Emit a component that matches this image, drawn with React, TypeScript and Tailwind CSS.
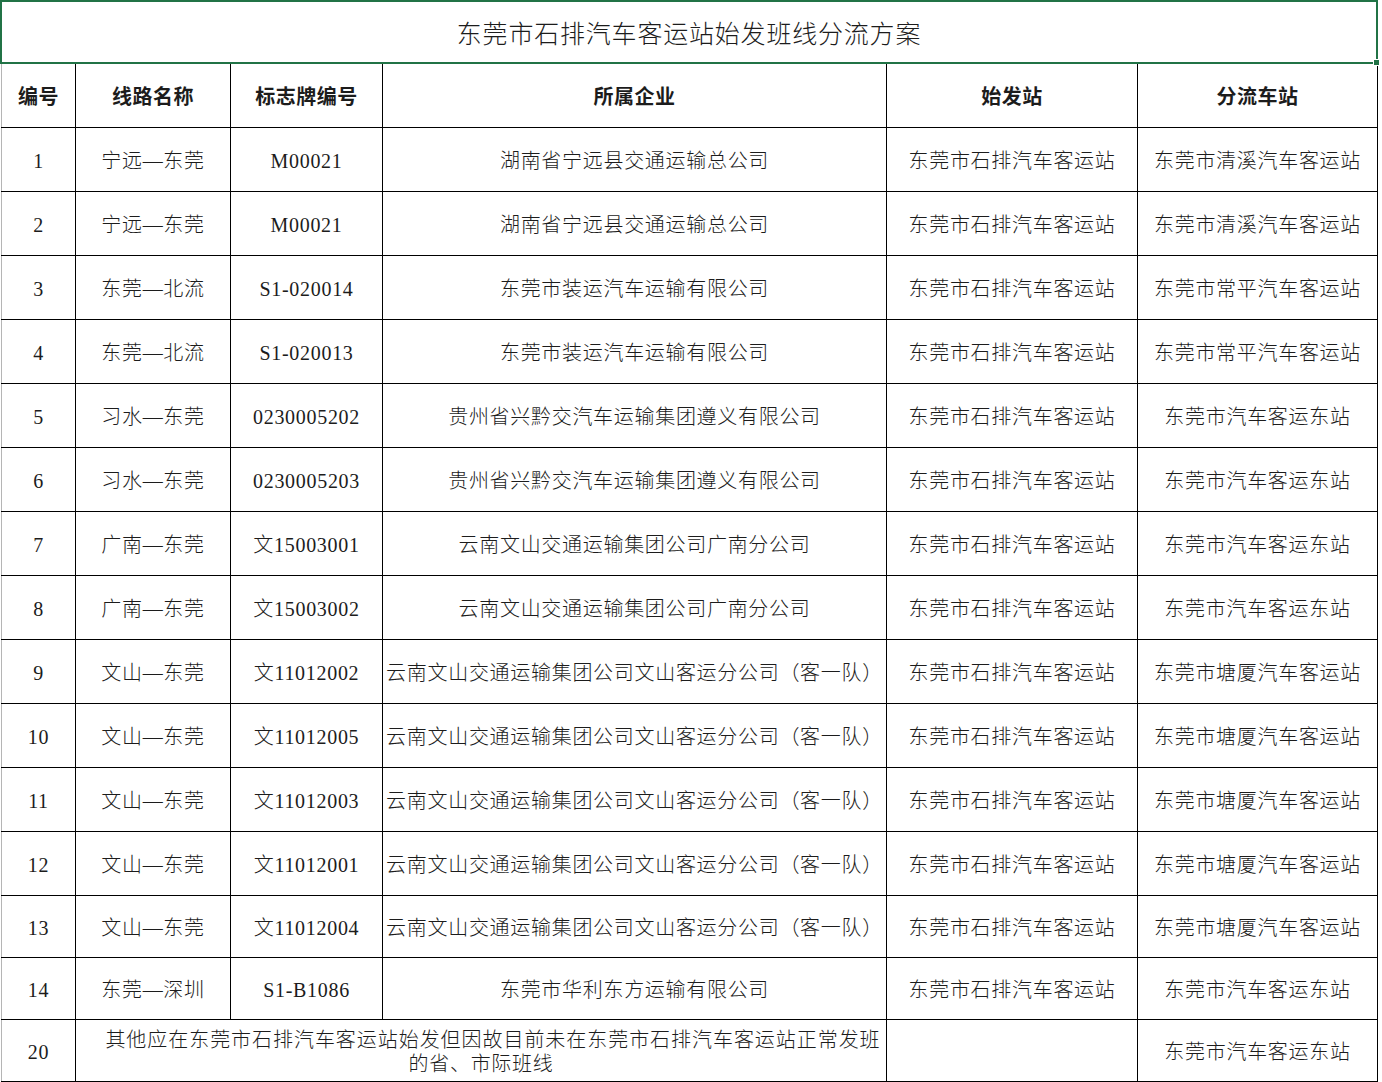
import React from 'react';

type Row = {
  no: string;
  line: string;
  plate: string;
  company: string;
  from: string;
  to: string;
};

const rows: Row[] = [
  { no: '1', line: '宁远—东莞', plate: 'M00021', company: '湖南省宁远县交通运输总公司', from: '东莞市石排汽车客运站', to: '东莞市清溪汽车客运站' },
  { no: '2', line: '宁远—东莞', plate: 'M00021', company: '湖南省宁远县交通运输总公司', from: '东莞市石排汽车客运站', to: '东莞市清溪汽车客运站' },
  { no: '3', line: '东莞—北流', plate: 'S1-020014', company: '东莞市装运汽车运输有限公司', from: '东莞市石排汽车客运站', to: '东莞市常平汽车客运站' },
  { no: '4', line: '东莞—北流', plate: 'S1-020013', company: '东莞市装运汽车运输有限公司', from: '东莞市石排汽车客运站', to: '东莞市常平汽车客运站' },
  { no: '5', line: '习水—东莞', plate: '0230005202', company: '贵州省兴黔交汽车运输集团遵义有限公司', from: '东莞市石排汽车客运站', to: '东莞市汽车客运东站' },
  { no: '6', line: '习水—东莞', plate: '0230005203', company: '贵州省兴黔交汽车运输集团遵义有限公司', from: '东莞市石排汽车客运站', to: '东莞市汽车客运东站' },
  { no: '7', line: '广南—东莞', plate: '文15003001', company: '云南文山交通运输集团公司广南分公司', from: '东莞市石排汽车客运站', to: '东莞市汽车客运东站' },
  { no: '8', line: '广南—东莞', plate: '文15003002', company: '云南文山交通运输集团公司广南分公司', from: '东莞市石排汽车客运站', to: '东莞市汽车客运东站' },
  { no: '9', line: '文山—东莞', plate: '文11012002', company: '云南文山交通运输集团公司文山客运分公司（客一队）', from: '东莞市石排汽车客运站', to: '东莞市塘厦汽车客运站' },
  { no: '10', line: '文山—东莞', plate: '文11012005', company: '云南文山交通运输集团公司文山客运分公司（客一队）', from: '东莞市石排汽车客运站', to: '东莞市塘厦汽车客运站' },
  { no: '11', line: '文山—东莞', plate: '文11012003', company: '云南文山交通运输集团公司文山客运分公司（客一队）', from: '东莞市石排汽车客运站', to: '东莞市塘厦汽车客运站' },
  { no: '12', line: '文山—东莞', plate: '文11012001', company: '云南文山交通运输集团公司文山客运分公司（客一队）', from: '东莞市石排汽车客运站', to: '东莞市塘厦汽车客运站' },
  { no: '13', line: '文山—东莞', plate: '文11012004', company: '云南文山交通运输集团公司文山客运分公司（客一队）', from: '东莞市石排汽车客运站', to: '东莞市塘厦汽车客运站' },
  { no: '14', line: '东莞—深圳', plate: 'S1-B1086', company: '东莞市华利东方运输有限公司', from: '东莞市石排汽车客运站', to: '东莞市汽车客运东站' },
];

const headers = ['编号', '线路名称', '标志牌编号', '所属企业', '始发站', '分流车站'];

// spreadsheet cell: thin black grid, centred text, nudged down to sit like SimSun
const cell = 'border border-black text-center align-middle whitespace-nowrap p-0 pt-[4px]';

export default function App() {
  return (
    <div
      className="w-[1382px] h-[1082px] bg-white text-[#1c1c1c] overflow-hidden"
      style={{ fontFamily: '"Liberation Serif", "Noto Sans CJK SC", serif' }}
    >
      <div className="relative w-[1378px] h-[64px] border-2 border-[#217346] flex items-center justify-center pt-[5px]">
        <span className="text-[25px] tracking-[0.8px] font-light">东莞市石排汽车客运站始发班线分流方案</span>
        <div className="absolute -right-[4px] -bottom-[4px] w-[7px] h-[7px] bg-[#217346] border border-white" />
      </div>
      <table className="table-fixed border-collapse w-[1376px] ml-px">
        <colgroup>
          <col className="w-[74px]" />
          <col className="w-[155px]" />
          <col className="w-[152px]" />
          <col className="w-[504px]" />
          <col className="w-[251px]" />
          <col className="w-[240px]" />
        </colgroup>
        <thead>
          <tr className="h-[63px]">
            {headers.map((h, i) => (
              <th
                key={h}
                className={`${cell} border-t-0 font-bold text-[20px] tracking-[0.5px] ${i === 0 ? 'border-l-[#b5b5b5]' : ''}`}
              >
                {h}
              </th>
            ))}
          </tr>
        </thead>
        <tbody className="text-[20px] tracking-[0.7px] font-light">
          {rows.map((r, idx) => (
            <tr key={r.no} className={idx === 12 || idx === 13 ? 'h-[62px]' : 'h-[64px]'}>
              <td className={`${cell} border-l-[#b5b5b5]`}>{r.no}</td>
              <td className={cell}>{r.line}</td>
              <td className={cell}>{r.plate}</td>
              <td className={cell}>{r.company}</td>
              <td className={cell}>{r.from}</td>
              <td className={cell}>{r.to}</td>
            </tr>
          ))}
          <tr className="h-[62px]">
            <td className={`${cell} border-l-[#b5b5b5]`}>20</td>
            <td colSpan={3} className={`${cell} leading-[24px]`}>
              <div className="pl-[24px] tracking-[0.95px]">
                其他应在东莞市石排汽车客运站始发但因故目前未在东莞市石排汽车客运站正常发班
              </div>
              <div>的省、市际班线</div>
            </td>
            <td className={cell}></td>
            <td className={cell}>东莞市汽车客运东站</td>
          </tr>
        </tbody>
      </table>
    </div>
  );
}
